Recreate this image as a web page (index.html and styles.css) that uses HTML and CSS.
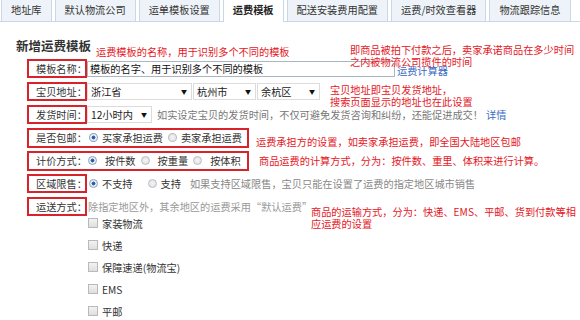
FILE: index.html
```html
<!DOCTYPE html>
<html lang="zh-CN">
<head>
  <meta charset="UTF-8">
  <title>运费模板</title>
  <link rel="stylesheet" href="styles.css">
</head>
<body>
  <div class="page">
    <div class="tabs">
      <div class="tab">地址库</div>
      <div class="tab">默认物流公司</div>
      <div class="tab">运单模板设置</div>
      <div class="tab active">运费模板</div>
      <div class="tab">配送安装费用配置</div>
      <div class="tab">运费/时效查看器</div>
      <div class="tab">物流跟踪信息</div>
    </div>

    <h2 class="title">新增运费模板</h2>

    <div class="form">
      <div class="row">
        <div class="lbl-box">模板名称：</div>
        <div class="input">模板的名字、用于识别多个不同的模板</div>
        <a class="link calc">运费计算器</a>
      </div>

      <div class="row">
        <div class="lbl-box">宝贝地址：</div>
        <div class="select w-prov">浙江省<span class="arrow">▼</span></div>
        <div class="select w-city">杭州市<span class="arrow">▼</span></div>
        <div class="select w-city">余杭区<span class="arrow">▼</span></div>
      </div>

      <div class="row">
        <div class="lbl-box">发货时间：</div>
        <div class="select w-time">12小时内<span class="arrow">▼</span></div>
        <span class="hint">如实设定宝贝的发货时间，不仅可避免发货咨询和纠纷，还能促进成交！</span>
        <a class="link detail">详情</a>
      </div>

      <div class="row">
        <div class="group">
          <span class="lbl">是否包邮：</span>
          <span class="radio on"></span><span class="opt">买家承担运费</span>
          <span class="radio"></span><span class="opt">卖家承担运费</span>
        </div>
      </div>

      <div class="row">
        <div class="group wide">
          <span class="lbl">计价方式：</span>
          <span class="radio on"></span><span class="opt">按件数</span>
          <span class="radio"></span><span class="opt">按重量</span>
          <span class="radio"></span><span class="opt">按体积</span>
        </div>
      </div>

      <div class="row">
        <div class="lbl-box">区域限售：</div>
        <span class="radio on"></span><span class="opt">不支持</span>
        <span class="radio gap-l"></span><span class="opt">支持</span>
        <span class="hint light">如果支持区域限售，宝贝只能在设置了运费的指定地区城市销售</span>
      </div>

      <div class="row">
        <div class="lbl-box">运送方式：</div>
        <span class="hint lighter">除指定地区外，其余地区的运费采用“默认运费”</span>
      </div>

      <ul class="checks">
        <li><span class="check"></span>家装物流</li>
        <li><span class="check"></span>快递</li>
        <li><span class="check"></span>保障速递(物流宝)</li>
        <li><span class="check"></span>EMS</li>
        <li><span class="check"></span>平邮</li>
      </ul>
    </div>

    <!-- annotations drawn over the screenshot -->
    <div class="note n1">运费模板的名称，用于识别多个不同的模板</div>
    <div class="note n2">即商品被拍下付款之后，卖家承诺商品在多少时间<br>之内被物流公司揽件的时间</div>
    <div class="note n3">宝贝地址即宝贝发货地址，<br>搜索页面显示的地址也在此设置</div>
    <div class="note n4">运费承担方的设置，如卖家承担运费，即全国大陆地区包邮</div>
    <div class="note n5">商品运费的计算方式，分为：按件数、重里、体积来进行计算。</div>
    <div class="note n6">商品的运输方式，分为：快递、EMS、平邮、货到付款等相<br>应运费的设置</div>
  </div>
</body>
</html>
```

FILE: styles.css
```css
body {
  margin: 0;
  background: #ffffff;
  font-family: "Noto Sans CJK SC", "Liberation Sans", sans-serif;
  font-size: 10.2px;
  color: #333;
}

.page {
  position: relative;
  width: 580px;
  height: 320px;
  overflow: hidden;
}

/* tabs */
.tabs {
  display: flex;
  gap: 3px;
  padding-left: 1px;
  height: 21px;
  border-bottom: 1px solid #c9d7e6;
}

.tab {
  flex-shrink: 0;
  white-space: nowrap;
  padding: 0 9px;
  line-height: 20px;
  background: #eef3f9;
  border: 1px solid #c9d7e6;
  border-top: none;
  border-bottom: none;
  color: #333;
}

.tab.active {
  background: #fff;
  font-weight: bold;
  color: #222;
  height: 22px;
}

.title {
  margin: 16px 0 0 16px;
  font-size: 12.5px;
  line-height: 15px;
  font-weight: bold;
  color: #333;
}

/* form rows */
.form {
  margin-top: 6px;
  padding-left: 27px;
  display: flex;
  flex-direction: column;
  gap: 4px;
}

.row {
  display: flex;
  align-items: center;
  height: 19px;
}

.lbl-box {
  box-sizing: border-box;
  width: 60px;
  height: 19px;
  border: 2px solid #d9232b;
  padding-left: 7px;
  line-height: 15px;
  white-space: nowrap;
}

.input {
  box-sizing: border-box;
  width: 308px;
  height: 16px;
  border: 1px solid #a9b6c4;
  padding-left: 2px;
  line-height: 14px;
  color: #111;
}

.link {
  color: #3a6bc6;
}

.calc {
  margin-left: 2px;
  margin-top: 3px;
}

.detail {
  margin-left: 3px;
}

.select {
  box-sizing: border-box;
  display: flex;
  justify-content: space-between;
  align-items: center;
  height: 17px;
  padding: 0 4px 0 3px;
  border: 1px solid #dcdcdc;
  margin-right: 1px;
  color: #222;
}

.arrow {
  font-size: 6px;
  color: #111;
}

.w-prov { width: 105px; }
.w-city { width: 63px; }
.w-time { width: 65px; }

.hint {
  margin-left: 4px;
  color: #777;
  white-space: nowrap;
}

.hint.light {
  color: #888;
}

.hint.lighter {
  margin-left: 1px;
  color: #999;
}

/* radio groups */
.group {
  box-sizing: border-box;
  display: flex;
  align-items: center;
  height: 20px;
  width: 222px;
  border: 2px solid #d9232b;
  padding-left: 7px;
}

.lbl {
  width: 54px;
  white-space: nowrap;
}

.radio {
  box-sizing: border-box;
  width: 9px;
  height: 9px;
  border-radius: 50%;
  border: 1px solid #b8bec6;
  background: radial-gradient(circle, #f5f5f5 0, #dcdcdc 100%);
  margin-right: 4px;
}

.radio.on {
  border-color: #8da2bd;
  background: radial-gradient(circle, #1d4f9c 0, #3d6fb8 35%, #e4ecf6 45%, #e4ecf6 100%);
}

.opt {
  margin-right: 5px;
  white-space: nowrap;
}

.group.wide .radio {
  margin-right: 8px;
}

.group.wide .lbl {
  width: 52px;
}

.row > .radio:first-of-type {
  margin-left: 2px;
}

.radio.gap-l {
  margin-left: 10px;
}

/* checkbox list */
.checks {
  list-style: none;
  margin: -4px 0 0 0;
  padding: 0 0 0 61px;
  display: flex;
  flex-direction: column;
  gap: 8px;
}

.checks li {
  display: flex;
  align-items: center;
  height: 14px;
  color: #333;
}

.check {
  box-sizing: border-box;
  width: 10px;
  height: 10px;
  border: 1px solid #b9b9b9;
  background: linear-gradient(#f2f2f2, #dedede);
  margin-right: 4px;
}

/* red annotations */
.note {
  position: absolute;
  color: #e5161e;
  line-height: 12px;
  white-space: nowrap;
}

.n1 { left: 96px; top: 46px; }
.n2 { left: 350px; top: 44px; }
.n3 { left: 330px; top: 84px; }
.n4 { left: 256px; top: 136px; }
.n5 { left: 259px; top: 155px; }
.n6 { left: 311px; top: 206px; }
```
